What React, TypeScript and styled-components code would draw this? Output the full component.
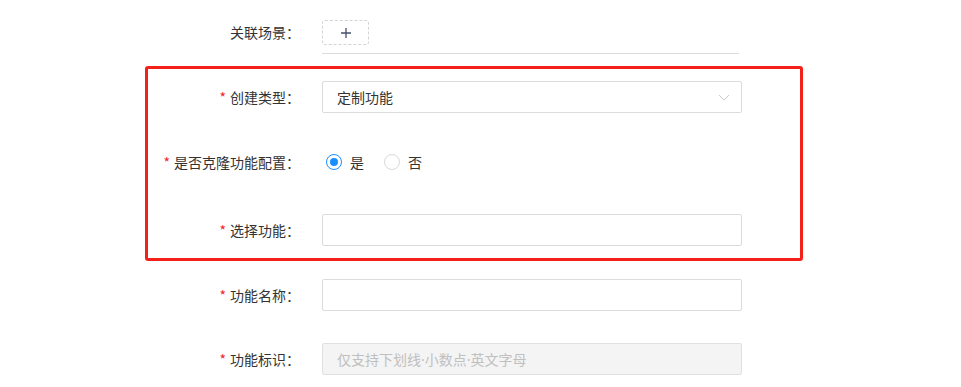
import React, { useState } from 'react'
import styled, { createGlobalStyle } from 'styled-components'

const GlobalStyle = createGlobalStyle`
    html, body {
        margin: 0;
        padding: 0;
        background: #fff;
    }
    body {
        font-family: 'Noto Sans CJK SC', 'Noto Sans', sans-serif;
        font-size: 14px;
        color: #333;
    }
`

const FORM_LABEL_WIDTH = 322
const HIGHLIGHT_LEFT = 145
const HIGHLIGHT_BORDER = 3

export default function App(): JSX.Element {
    const [clone, setClone] = useState(true)

    return (
        <Page>
            <GlobalStyle />
            <FormItem $labelWidth={FORM_LABEL_WIDTH} $align="start" $mb={12}>
                <Label $lineHeight={25}>关联场景：</Label>
                <SceneField>
                    <AddButton type="button" aria-label="添加场景">
                        <svg width="10" height="10" viewBox="0 0 10 10">
                            <path d="M5 0V10M0 5H10" stroke="#45526a" strokeWidth="1.3" />
                        </svg>
                    </AddButton>
                </SceneField>
            </FormItem>

            <Highlight>
                <FormItem $labelWidth={FORM_LABEL_WIDTH - HIGHLIGHT_LEFT - HIGHLIGHT_BORDER} $mt={12} $mb={33}>
                    <Label $required>创建类型：</Label>
                    <Select>
                        <span>定制功能</span>
                        <svg width="12" height="7" viewBox="0 0 12 7">
                            <path d="M1 1L6 6L11 1" fill="none" stroke="#c6c9cf" strokeWidth="1" />
                        </svg>
                    </Select>
                </FormItem>
                <FormItem $labelWidth={FORM_LABEL_WIDTH - HIGHLIGHT_LEFT - HIGHLIGHT_BORDER} $mb={36}>
                    <Label $required>是否克隆功能配置：</Label>
                    <RadioGroup>
                        <RadioOption onClick={() => setClone(true)}>
                            <RadioDot $checked={clone} />
                            是
                        </RadioOption>
                        <RadioOption onClick={() => setClone(false)}>
                            <RadioDot $checked={!clone} />
                            否
                        </RadioOption>
                    </RadioGroup>
                </FormItem>
                <FormItem $labelWidth={FORM_LABEL_WIDTH - HIGHLIGHT_LEFT - HIGHLIGHT_BORDER} $mb={12}>
                    <Label $required>选择功能：</Label>
                    <Input />
                </FormItem>
            </Highlight>

            <FormItem $labelWidth={FORM_LABEL_WIDTH} $mt={18} $mb={32}>
                <Label $required>功能名称：</Label>
                <Input />
            </FormItem>
            <FormItem $labelWidth={FORM_LABEL_WIDTH}>
                <Label $required>功能标识：</Label>
                <Input disabled placeholder="仅支持下划线·小数点·英文字母" />
            </FormItem>
        </Page>
    )
}

const Page = styled.div`
    width: 961px;
    height: 387px;
    padding-top: 20px;
    box-sizing: border-box;
    overflow: hidden;
`

const FormItem = styled.div<{ $labelWidth: number; $align?: string; $mt?: number; $mb?: number }>`
    display: grid;
    grid-template-columns: ${(p) => p.$labelWidth}px 420px;
    align-items: ${(p) => p.$align || 'center'};
    margin-top: ${(p) => p.$mt || 0}px;
    margin-bottom: ${(p) => p.$mb || 0}px;
    min-height: 32px;
`

const Label = styled.label<{ $required?: boolean; $lineHeight?: number }>`
    box-sizing: border-box;
    padding-right: 22px;
    text-align: right;
    line-height: ${(p) => p.$lineHeight || 32}px;
    color: #333;
    white-space: nowrap;
    &::before {
        content: ${(p) => (p.$required ? "'*'" : 'none')};
        color: #f5222d;
        margin-right: 4px;
    }
`

const SceneField = styled.div`
    width: 417px;
    padding-bottom: 8px;
    border-bottom: 1px solid #dcdcdc;
`

const AddButton = styled.button`
    width: 47px;
    height: 25px;
    padding: 0;
    display: flex;
    align-items: center;
    justify-content: center;
    background: #fff;
    border: 1px dashed #d4d4d4;
    border-radius: 3px;
    cursor: pointer;
`

const Highlight = styled.div`
    margin-left: ${HIGHLIGHT_LEFT}px;
    width: 658px;
    box-sizing: border-box;
    border: ${HIGHLIGHT_BORDER}px solid #f4211b;
    border-radius: 3px;
`

const Select = styled.div`
    height: 32px;
    box-sizing: border-box;
    padding: 0 11px 0 14px;
    display: flex;
    align-items: center;
    justify-content: space-between;
    border: 1px solid #dcdcdc;
    border-radius: 2px;
    color: #333;
    cursor: pointer;
`

const Input = styled.input`
    width: 420px;
    height: 32px;
    box-sizing: border-box;
    padding: 0 14px;
    border: 1px solid #dcdcdc;
    border-radius: 2px;
    font: inherit;
    font-family: 'Noto Sans', 'Noto Sans CJK SC', sans-serif;
    color: #333;
    outline: none;
    &:disabled {
        background: #f4f4f4;
        border-color: #e0e0e0;
        cursor: not-allowed;
    }
    &::placeholder {
        color: #c0c0c0;
    }
`

const RadioGroup = styled.div`
    display: flex;
    align-items: center;
    gap: 20px;
    padding-left: 4px;
`

const RadioOption = styled.span`
    display: inline-flex;
    align-items: center;
    gap: 8px;
    color: #333;
    cursor: pointer;
`

const RadioDot = styled.span<{ $checked: boolean }>`
    width: 16px;
    height: 16px;
    box-sizing: border-box;
    border-radius: 50%;
    border: 1px solid ${(p) => (p.$checked ? '#1890ff' : '#d9d9d9')};
    display: flex;
    align-items: center;
    justify-content: center;
    &::after {
        content: '';
        width: 8px;
        height: 8px;
        border-radius: 50%;
        background: #1890ff;
        display: ${(p) => (p.$checked ? 'block' : 'none')};
    }
`
